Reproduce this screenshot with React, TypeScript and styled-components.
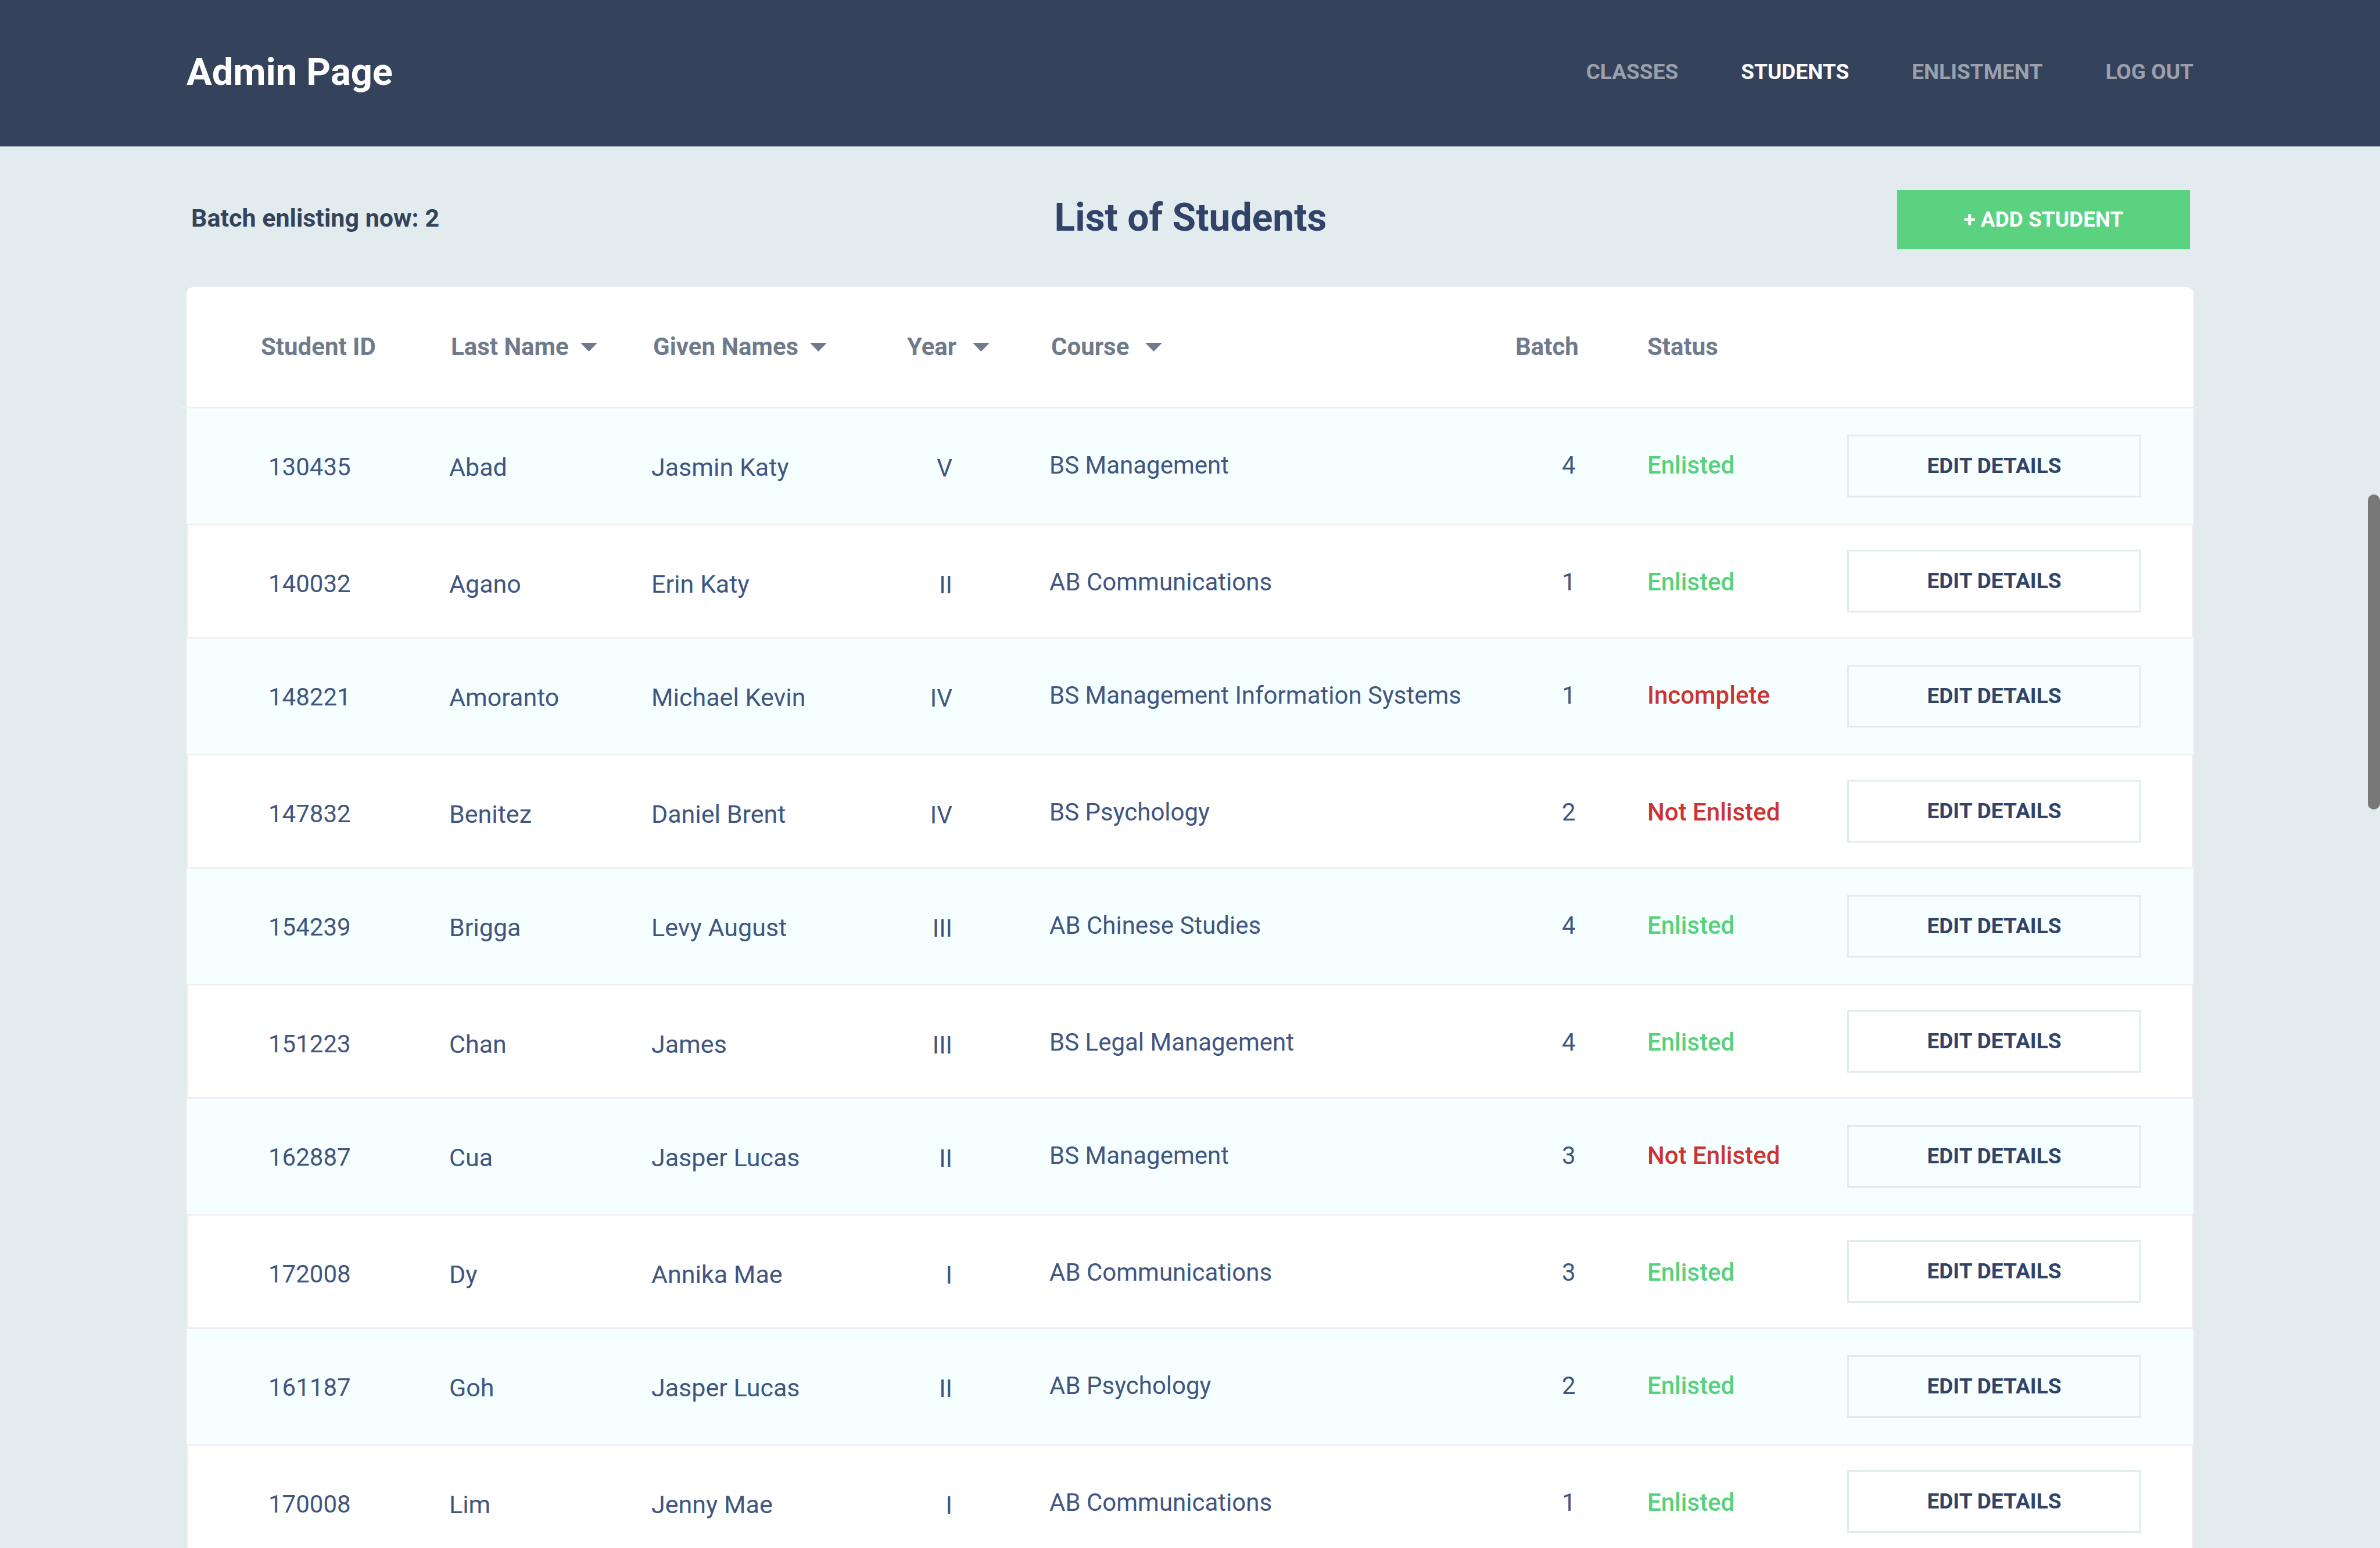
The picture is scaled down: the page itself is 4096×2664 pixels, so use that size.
import React from "react";
import styled, { createGlobalStyle } from "styled-components";

const GlobalStyle = createGlobalStyle`
  *, *::before, *::after { box-sizing: border-box; }
  body {
    margin: 0;
    background: #e2ebee;
    color: #405680;
    font-family: Roboto, "Liberation Sans", sans-serif;
    font-size: 42px;
    line-height: 52px;
  }
`;

const Page = styled.div`
  position: relative;
  height: 100vh;
  overflow: hidden;
`;

const TopBar = styled.header`
  display: flex;
  align-items: center;
  justify-content: space-between;
  height: 252px;
  padding: 0 321px 4px;
  background: #35425b;
`;

const Brand = styled.h1`
  margin: 0;
  color: #fff;
  font-size: 65px;
  font-weight: 700;
  line-height: 80px;
`;

const Nav = styled.nav`
  display: flex;
  gap: 108px;
`;

const NavLink = styled.a<{ $active?: boolean }>`
  color: ${(p) => (p.$active ? "#fff" : "#9aa0ad")};
  font-size: 37px;
  font-weight: 700;
  text-decoration: none;
  text-transform: uppercase;
`;

const Content = styled.main`
  padding: 0 321px;
`;

const Toolbar = styled.div`
  display: grid;
  grid-template-columns: 1fr auto 1fr;
  align-items: center;
  padding: 75px 6px 65px 8px;
`;

const BatchNote = styled.p`
  margin: 0;
  padding-bottom: 6px;
  color: #35425b;
  font-size: 43px;
  font-weight: 700;
`;

const Title = styled.h2`
  margin: 0;
  padding-bottom: 6px;
  color: #314368;
  font-size: 66px;
  font-weight: 700;
  line-height: 80px;
`;

const AddButton = styled.button`
  justify-self: end;
  width: 504px;
  height: 102px;
  padding: 0;
  border: 0;
  background: #5ad27f;
  color: #fff;
  font: inherit;
  font-size: 37px;
  font-weight: 700;
`;

const Table = styled.table`
  width: 100%;
  table-layout: fixed;
  border-spacing: 0;
  border-radius: 12px;
  background: #fff;
`;

const Column = styled.col<{ $width?: number }>`
  width: ${(p) => (p.$width ? `${p.$width}px` : "auto")};
`;

const HeadCell = styled.th<{ $inset?: number }>`
  position: relative;
  height: 209px;
  padding: 0 0 0 ${(p) => p.$inset ?? 0}px;
  border-bottom: 3px solid #f0f0f0;
  color: #6f7b8c;
  font-weight: 700;
  text-align: left;
  white-space: nowrap;

  /* the rule under the headings runs a little past the card */
  &:first-child::before,
  &:last-child::before {
    content: "";
    position: absolute;
    bottom: -3px;
    width: 9px;
    height: 3px;
    background: #f0f0f0;
  }
  &:first-child::before { right: 100%; }
  &:last-child::before { left: 100%; }
`;

const SortButton = styled.button<{ $gap: number }>`
  display: flex;
  align-items: center;
  gap: ${(p) => p.$gap}px;
  padding: 0;
  border: 0;
  background: none;
  color: inherit;
  font: inherit;
`;

const Cell = styled.td<{ $inset?: number; $top?: number }>`
  padding: ${(p) => p.$top ?? 75}px 0 0 ${(p) => p.$inset ?? 0}px;
  border-bottom: 3px solid #f0f0f0;
  vertical-align: top;
  white-space: nowrap;
`;

const NameCell = styled(Cell)`
  font-size: 43px;
`;

const YearCell = styled(Cell)`
  padding-right: 167px;
  text-align: right;
`;

const StatusCell = styled(Cell)<{ $enlisted: boolean }>`
  color: ${(p) => (p.$enlisted ? "#57d17c" : "#cc3432")};
  font-weight: 500;
`;

const ActionCell = styled(Cell)`
  padding: 45px 90px 45px 0;
`;

const Row = styled.tr`
  &:nth-child(odd) { background: #f6ffff; }
  &:nth-child(even) ${ActionCell} {
    padding-top: 42px;
    padding-bottom: 42px;
  }
  &:nth-child(even) > td:first-child { box-shadow: inset 3px 0 #f0f0f0; }
  &:nth-child(even) > td:last-child { box-shadow: inset -3px 0 #f0f0f0; }
`;

const EditButton = styled.button`
  display: block;
  width: 100%;
  height: 108px;
  padding: 0;
  border: 3px solid #e2ebee;
  background: transparent;
  color: #314368;
  font: inherit;
  font-size: 37px;
  font-weight: 700;
`;

const ScrollThumb = styled.div`
  position: absolute;
  top: 851px;
  right: 0;
  width: 21px;
  height: 542px;
  border-radius: 11px;
  background: #787878;
`;

const Caret = () => (
  <svg width="29" height="15" viewBox="0 0 29 15" aria-hidden="true">
    <path d="M0 0h29L14.5 15z" fill="currentColor" />
  </svg>
);

type Status = "Enlisted" | "Not Enlisted" | "Incomplete";

interface Student {
  id: string;
  last: string;
  given: string;
  year: string;
  course: string;
  batch: number;
  status: Status;
}

const students: Student[] = [
  { id: "130435", last: "Abad", given: "Jasmin Katy", year: "V", course: "BS Management", batch: 4, status: "Enlisted" },
  { id: "140032", last: "Agano", given: "Erin Katy", year: "II", course: "AB Communications", batch: 1, status: "Enlisted" },
  { id: "148221", last: "Amoranto", given: "Michael Kevin", year: "IV", course: "BS Management Information Systems", batch: 1, status: "Incomplete" },
  { id: "147832", last: "Benitez", given: "Daniel Brent", year: "IV", course: "BS Psychology", batch: 2, status: "Not Enlisted" },
  { id: "154239", last: "Brigga", given: "Levy August", year: "III", course: "AB Chinese Studies", batch: 4, status: "Enlisted" },
  { id: "151223", last: "Chan", given: "James", year: "III", course: "BS Legal Management", batch: 4, status: "Enlisted" },
  { id: "162887", last: "Cua", given: "Jasper Lucas", year: "II", course: "BS Management", batch: 3, status: "Not Enlisted" },
  { id: "172008", last: "Dy", given: "Annika Mae", year: "I", course: "AB Communications", batch: 3, status: "Enlisted" },
  { id: "161187", last: "Goh", given: "Jasper Lucas", year: "II", course: "AB Psychology", batch: 2, status: "Enlisted" },
  { id: "170008", last: "Lim", given: "Jenny Mae", year: "I", course: "AB Communications", batch: 1, status: "Enlisted" },
];

const links = ["Classes", "Students", "Enlistment", "Log out"];

export default function App() {
  return (
    <Page>
      <GlobalStyle />
      <TopBar>
        <Brand>Admin Page</Brand>
        <Nav>
          {links.map((name) => (
            <NavLink key={name} href="#" $active={name === "Students"}>
              {name}
            </NavLink>
          ))}
        </Nav>
      </TopBar>
      <Content>
        <Toolbar>
          <BatchNote>Batch enlisting now: 2</BatchNote>
          <Title>List of Students</Title>
          <AddButton type="button">+ ADD STUDENT</AddButton>
        </Toolbar>
        <Table>
          <colgroup>
            <Column $width={452} />
            <Column $width={348} />
            <Column $width={440} />
            <Column $width={245} />
            <Column />
            <Column $width={230} />
            <Column $width={344} />
            <Column $width={596} />
          </colgroup>
          <thead>
            <tr>
              <HeadCell $inset={128}>Student ID</HeadCell>
              <HeadCell $inset={3}>
                <SortButton type="button" $gap={20}>Last Name <Caret /></SortButton>
              </HeadCell>
              <HeadCell $inset={3}>
                <SortButton type="button" $gap={20}>Given Names <Caret /></SortButton>
              </HeadCell>
              <HeadCell>
                <SortButton type="button" $gap={28}>Year <Caret /></SortButton>
              </HeadCell>
              <HeadCell $inset={3}>
                <SortButton type="button" $gap={28}>Course <Caret /></SortButton>
              </HeadCell>
              <HeadCell $inset={3}>Batch</HeadCell>
              <HeadCell>Status</HeadCell>
              <HeadCell />
            </tr>
          </thead>
          <tbody>
            {students.map((s) => (
              <Row key={s.id}>
                <Cell $inset={141}>{s.id}</Cell>
                <NameCell>{s.last}</NameCell>
                <NameCell>{s.given}</NameCell>
                <YearCell $top={77}>{s.year}</YearCell>
                <Cell $top={72}>{s.course}</Cell>
                <Cell $top={72} $inset={83}>{s.batch}</Cell>
                <StatusCell $top={72} $enlisted={s.status === "Enlisted"}>{s.status}</StatusCell>
                <ActionCell>
                  <EditButton type="button">EDIT DETAILS</EditButton>
                </ActionCell>
              </Row>
            ))}
          </tbody>
        </Table>
      </Content>
      <ScrollThumb />
    </Page>
  );
}
